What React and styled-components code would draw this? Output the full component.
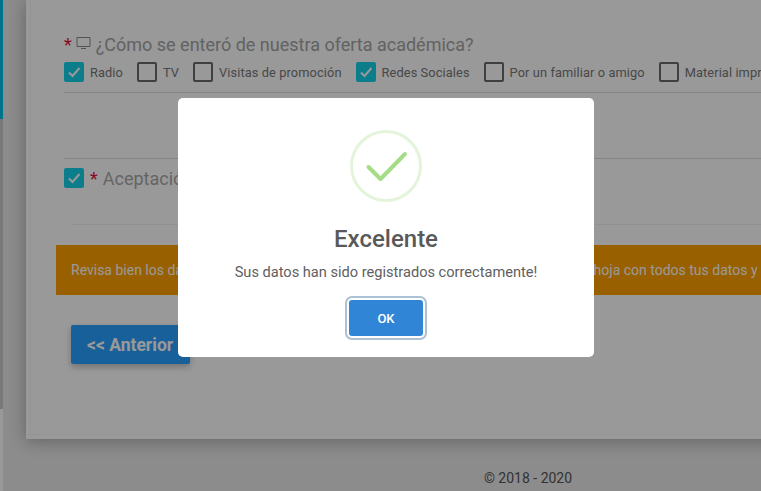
import React from 'react';
import styled, { createGlobalStyle } from 'styled-components';

const GlobalStyle = createGlobalStyle`
  html, body {
    margin: 0;
    padding: 0;
    height: 100%;
    overflow: hidden;
    background-color: #e9e9e9;
    font-family: Roboto, "Liberation Sans", sans-serif;
  }
`;

const Page = styled.div`
  display: flex;
  width: 761px;
  height: 491px;
  overflow: hidden;
`;

const Rail = styled.div`
  flex: 0 0 3px;
  display: flex;
  flex-direction: column;
  background-color: #ffffff;
`;

const RailAccent = styled.div`
  flex: 0 0 119px;
  background-color: #00bfe8;
`;

const RailTrack = styled.div`
  flex: 0 0 290px;
  background-color: #c8c8c8;
`;

const Main = styled.div`
  flex: 0 0 1004px;
  margin-left: 23px;
  display: flex;
  flex-direction: column;
`;

const Card = styled.div`
  box-sizing: border-box;
  height: 439px;
  padding: 35px 0 0 26px;
  background-color: #ffffff;
  border-left: 4px solid #ffffff;
  border-bottom: 4px solid #ffffff;
  box-shadow: inset 1px -1px 0 #f7f7f7, 0 2px 16px rgba(0, 0, 0, 0.3);
`;

const Question = styled.div`
  display: flex;
  align-items: center;
  margin-left: 8px;
  height: 20px;
  font-size: 18px;
  line-height: 20px;
  color: #a4a4a4;
`;

const Required = styled.span`
  color: #e3123f;
  margin-right: ${(p) => p.$gap}px;
  font-size: 18px;
`;

const ScreenIcon = styled.svg`
  width: 15px;
  height: 14px;
  margin-right: 5px;
  margin-top: -4px;
  color: #8a8a8a;
`;

const Options = styled.div`
  display: flex;
  align-items: center;
  margin: 7px 0 0 8px;
  height: 20px;
  white-space: nowrap;
`;

const Option = styled.label`
  display: flex;
  align-items: center;
  margin-right: 14px;
  font-size: 12.8px;
  letter-spacing: 0.1px;
  color: #787878;
`;

const Box = styled.span`
  box-sizing: border-box;
  flex: 0 0 20px;
  width: 20px;
  height: 20px;
  margin-right: 6px;
  display: flex;
  align-items: center;
  justify-content: center;
  border-radius: 2px;
  background-color: ${(p) => (p.$checked ? '#15d0e6' : 'transparent')};
  border: ${(p) => (p.$checked ? '0' : '2px solid #696969')};
`;

const Tick = styled.svg`
  width: 14px;
  height: 14px;
`;

const Divider = styled.div`
  height: 1px;
  margin-left: ${(p) => p.$left || 8}px;
  margin-top: ${(p) => p.$top}px;
  background-color: ${(p) => p.$color || '#dcdcdc'};
`;

const Acceptance = styled.div`
  display: flex;
  align-items: center;
  height: 20px;
  margin: 9px 0 0 8px;
  font-size: 18px;
  color: #a8a8a8;
`;

const Notice = styled.div`
  box-sizing: border-box;
  height: 50px;
  margin-top: 20px;
  padding: 0 15px;
  display: flex;
  align-items: center;
  white-space: nowrap;
  background-color: #ffa000;
  color: #ffffff;
  font-size: 14px;
`;

const NoticeGap = styled.span`
  display: inline-block;
  width: 391px;
`;

const BackButton = styled.button`
  display: block;
  width: 119px;
  height: 39px;
  margin: 30px 0 0 15px;
  padding: 0 0 0 16px;
  border: 0;
  border-radius: 2px;
  background-color: #28a0ff;
  color: #ffffff;
  font-family: inherit;
  font-size: 17.5px;
  font-weight: 700;
  text-align: left;
  box-shadow: 0 3px 6px rgba(0, 0, 0, 0.25);
`;

const Footer = styled.footer`
  flex: 1;
  display: flex;
  justify-content: center;
  padding-top: 31px;
  font-size: 14px;
  color: #555555;
`;

const Overlay = styled.div`
  position: fixed;
  top: 0;
  left: 0;
  width: 772px;
  height: 491px;
  background-color: rgba(0, 0, 0, 0.4);
`;

const Modal = styled.div`
  position: absolute;
  top: 98px;
  left: 178px;
  box-sizing: border-box;
  width: 416px;
  height: 259px;
  padding-top: 32px;
  display: flex;
  flex-direction: column;
  align-items: center;
  border-radius: 5px;
  background-color: #ffffff;
`;

const SuccessIcon = styled.svg`
  width: 72px;
  height: 72px;
`;

const Title = styled.h2`
  margin: 23px 0 0;
  font-size: 24px;
  line-height: 28px;
  font-weight: 500;
  color: #595959;
`;

const Message = styled.p`
  margin: 9px 0 0;
  font-size: 14.6px;
  line-height: 20px;
  color: #606060;
`;

const OkButton = styled.button`
  width: 74px;
  height: 36px;
  margin-top: 18px;
  padding: 0;
  border: 0;
  border-radius: 3px;
  background-color: #3085d6;
  color: #ffffff;
  font-family: inherit;
  font-size: 13px;
  font-weight: 500;
  box-shadow: 0 0 0 2px #ffffff, 0 0 0 4px rgba(50, 100, 150, 0.4);
`;

const options = [
  { label: 'Radio', checked: true },
  { label: 'TV' },
  { label: 'Visitas de promoción' },
  { label: 'Redes Sociales', checked: true },
  { label: 'Por un familiar o amigo' },
  { label: 'Material impreso' },
];

const Check = ({ checked }) => (
  <Box $checked={checked}>
    {checked && (
      <Tick viewBox="0 0 14 14" fill="none" stroke="#ffffff" strokeWidth="2">
        <path d="M2 7.5 L5.5 11 L12.5 3" />
      </Tick>
    )}
  </Box>
);

export default function App() {
  return (
    <>
      <GlobalStyle />
      <Page>
        <Rail>
          <RailAccent />
          <RailTrack />
        </Rail>
        <Main>
          <Card>
            <Question>
              <Required $gap={4}>*</Required>
              <ScreenIcon viewBox="0 0 15 14" fill="none" stroke="currentColor" strokeWidth="1">
                <path d="M1 1.5 H14 V10.5 H1 Z M5 12.5 H10" />
              </ScreenIcon>
              ¿Cómo se enteró de nuestra oferta académica?
            </Question>
            <Options>
              {options.map((o) => (
                <Option key={o.label}>
                  <Check checked={o.checked} />
                  {o.label}
                </Option>
              ))}
            </Options>
            <Divider $top={10} />
            <Divider $top={65} />
            <Acceptance>
              <Check checked />
              <Required $gap={5}>*</Required>
              Aceptación
            </Acceptance>
            <Divider $top={36} $left={16} $color="#f2f2f2" />
            <Notice>
              Revisa bien los datos<NoticeGap />hoja con todos tus datos y
            </Notice>
            <BackButton>&lt;&lt; Anterior</BackButton>
          </Card>
          <Footer>© 2018 - 2020</Footer>
        </Main>
      </Page>
      <Overlay>
        <Modal>
          <SuccessIcon viewBox="0 0 72 72" fill="none">
            <circle cx="36" cy="36" r="34.5" stroke="#a5dc86" strokeOpacity="0.3" strokeWidth="3" />
            <path d="M18.5 37 L30.5 49 L55 24" stroke="#a5dc86" strokeWidth="4" strokeLinecap="round" strokeLinejoin="round" />
          </SuccessIcon>
          <Title>Excelente</Title>
          <Message>Sus datos han sido registrados correctamente!</Message>
          <OkButton>OK</OkButton>
        </Modal>
      </Overlay>
    </>
  );
}
